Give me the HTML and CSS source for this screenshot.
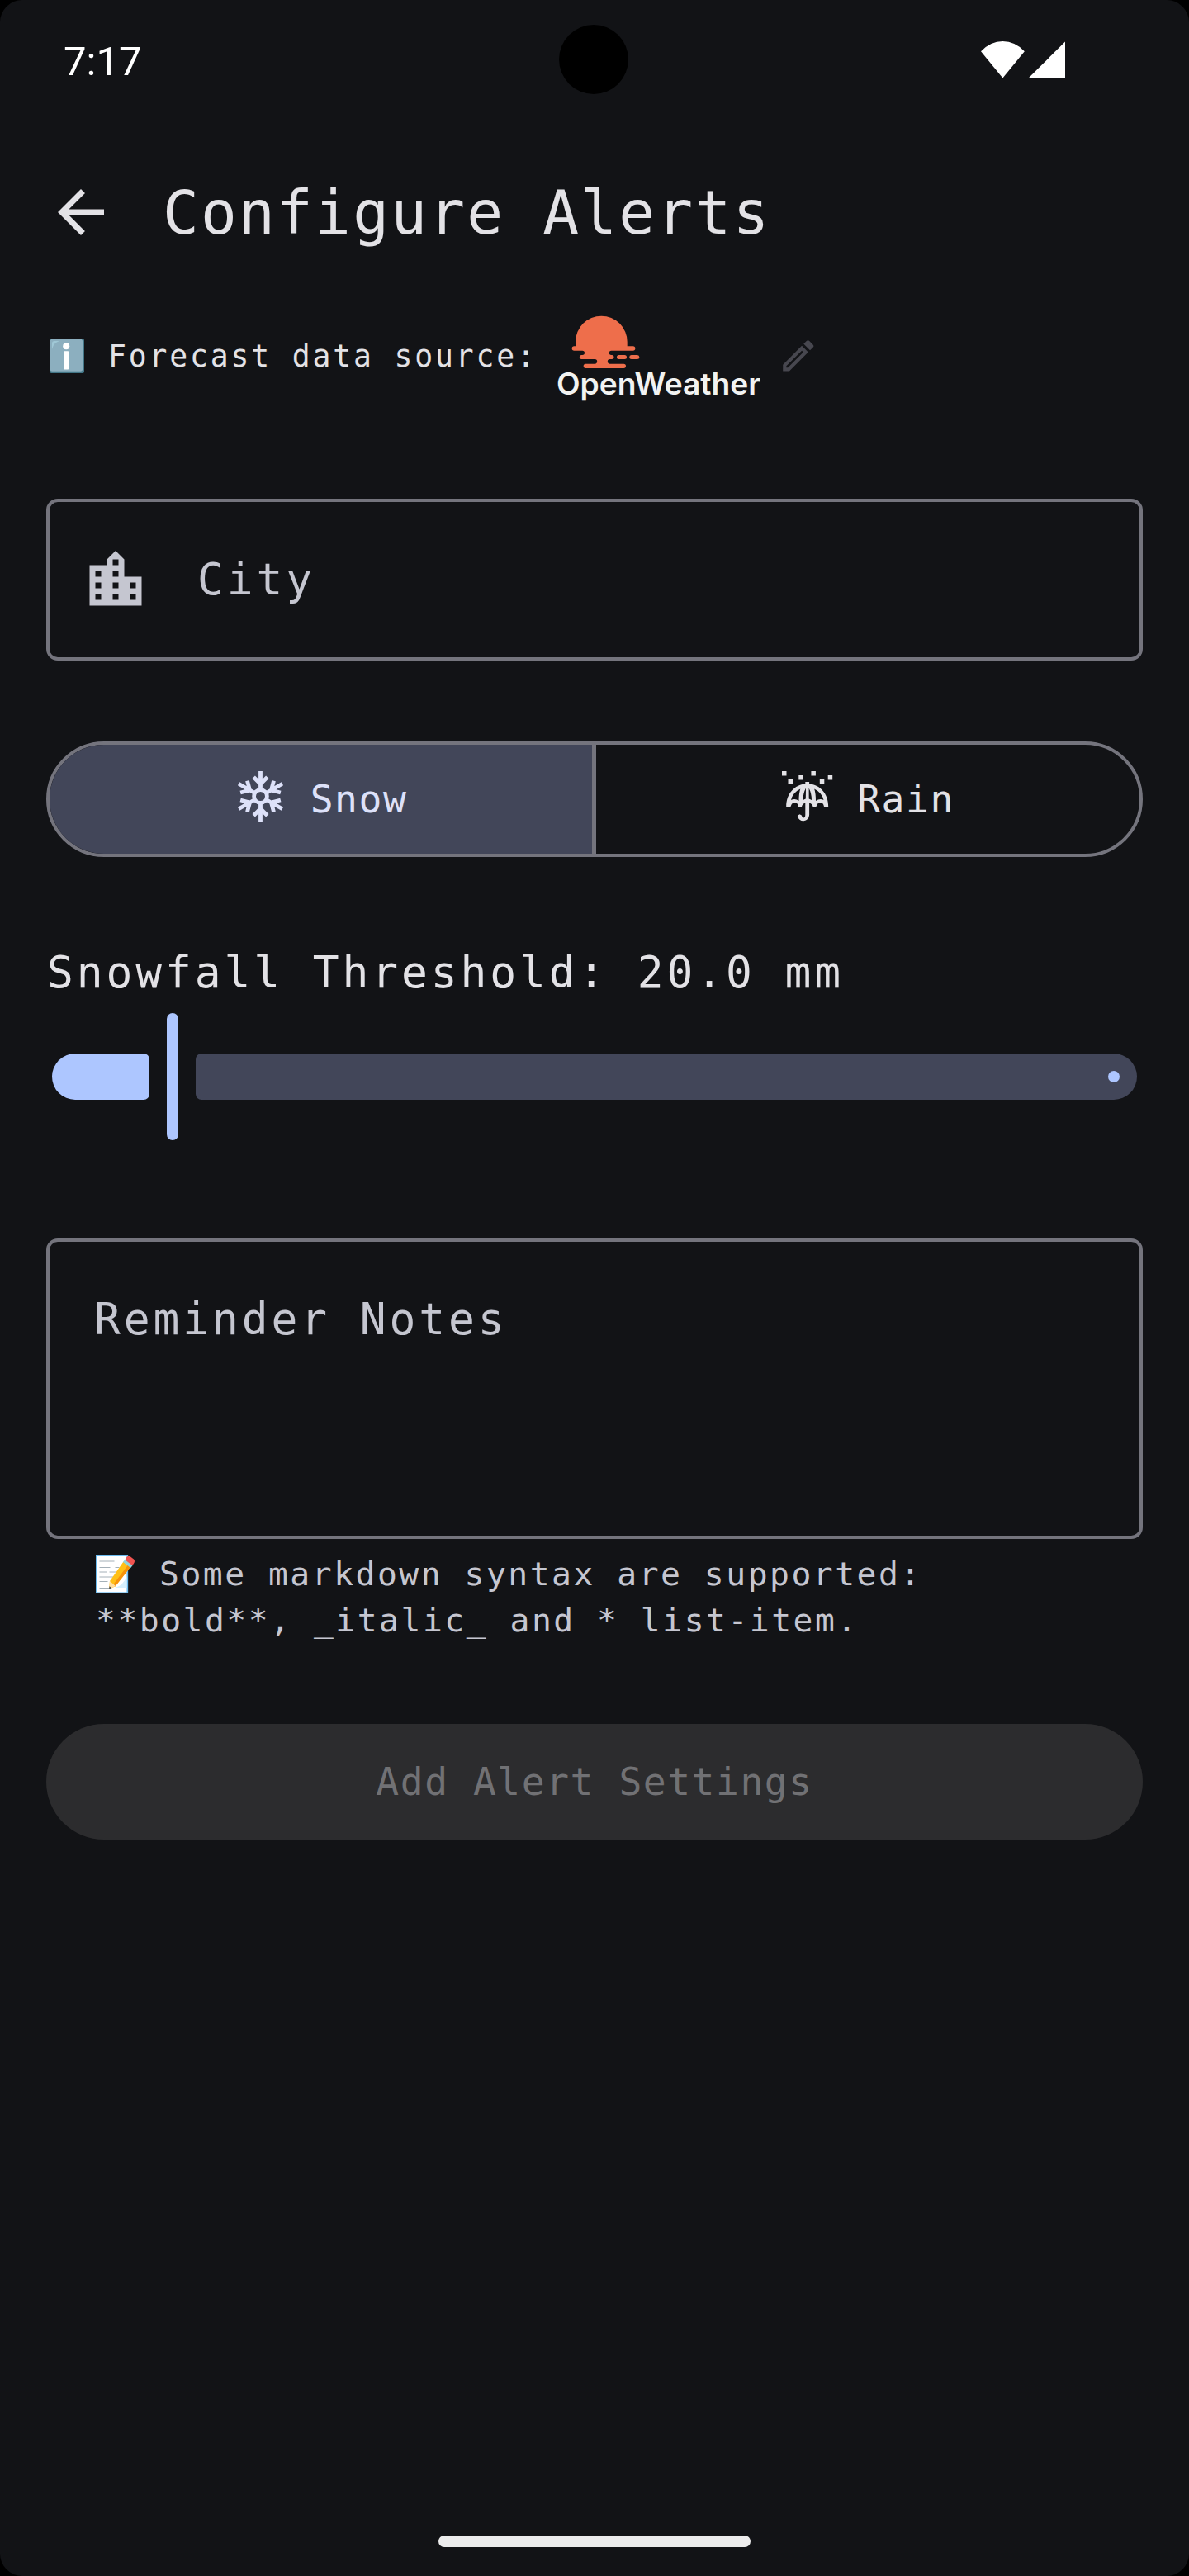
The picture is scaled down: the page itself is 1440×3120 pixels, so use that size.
FILE: index.html
```html
<!DOCTYPE html>
<html lang="en">
<head>
<meta charset="utf-8">
<title>Configure Alerts</title>
<link rel="stylesheet" href="styles.css">
</head>
<body>
<div class="screen">
  <div class="status-bar">
    <span class="clock">7:17</span>
    <span class="camera"></span>
    <svg class="signals" viewBox="0 0 102 45" aria-hidden="true">
      <path d="M0 12.2Q11.5 0 26.4 0T52.8 12.2L26.4 44.5Z"/>
      <path d="M102 .5V44.6H57.6Z"/>
    </svg>
  </div>

  <header class="app-bar">
    <svg class="back" viewBox="0 0 24 24" aria-hidden="true"><path d="M20 11H7.83l5.59-5.59L12 4l-8 8 8 8 1.41-1.41L7.83 13H20v-2z"/></svg>
    <h1 class="title">Configure Alerts</h1>
  </header>

  <main class="content">
    <div class="source">
      <svg class="info" viewBox="0 0 42 42" aria-hidden="true">
        <rect width="42" height="42" rx="2.5" fill="#427687"/>
        <rect x=".8" y=".8" width="39.2" height="39" rx="2.5" fill="#8cafbf"/>
        <path d="M3 13V6Q3 3 6 3h6Q5 5 3 13Z" fill="#b4e1ed" opacity=".5"/>
        <circle cx="20.2" cy="9.3" r="4" fill="#fff"/>
        <rect x="17.2" y="15.2" width="6" height="22.4" rx="1" fill="#fff"/>
      </svg>
      <span class="source-label">Forecast data source:</span>
      <svg class="logo" viewBox="0 0 249 110" aria-label="OpenWeather">
        <g fill="#ee6e4b" transform="translate(-35 -20) scale(.33333)">
          <path d="M168 178V162A94 94 0 0 1 356 162V178H377a8 8 0 0 1 0 16H298a8 8 0 0 0 0 16H300a7.5 7.5 0 0 1 0 15H293a8.5 8.5 0 0 0 0 17H343a8 8 0 0 1 0 16H205a8 8 0 0 1 0-16H238a8.5 8.5 0 0 0 0-17H190a7.5 7.5 0 0 1 0-15H193a8 8 0 0 0 0-16H163a8 8 0 0 1 0-16Z"/>
          <rect x="318" y="210" width="36" height="15" rx="7.5"/>
          <rect x="364" y="210" width="36" height="15" rx="7.5"/>
        </g>
        <text class="wordmark" x="-2" y="98" textLength="247" lengthAdjust="spacingAndGlyphs">OpenWeather</text>
      </svg>
      <svg class="edit" viewBox="0 0 24 24" aria-hidden="true"><path d="M14.06 9.02l.92.92L5.92 19H5v-.92l9.06-9.06M17.66 3c-.25 0-.51.1-.7.29l-1.83 1.83 3.75 3.75 1.83-1.83c.39-.39.39-1.02 0-1.41l-2.34-2.34c-.2-.2-.45-.29-.71-.29zm-3.6 3.19L3 17.25V21h3.75L17.81 9.94l-3.75-3.75z"/></svg>
    </div>

    <div class="field city">
      <svg class="city-icon" viewBox="0 0 24 24" aria-hidden="true"><path d="M15 11V5l-3-3-3 3v2H3v14h18V11h-6zm-8 8H5v-2h2v2zm0-4H5v-2h2v2zm0-4H5V9h2v2zm6 8h-2v-2h2v2zm0-4h-2v-2h2v2zm0-4h-2V9h2v2zm0-4h-2V5h2v2zm6 12h-2v-2h2v2zm0-4h-2v-2h2v2z"/></svg>
      <span class="body-text">City</span>
    </div>

    <div class="segments">
      <div class="segment selected">
        <svg class="segment-icon" viewBox="-31.5 -31.5 63 63" aria-hidden="true">
          <defs><path id="arm" d="M0-9V-30.5M-8.3-23.3L0-15 8.3-23.3"/></defs>
          <g fill="none" stroke="currentColor" stroke-width="4.8">
            <circle r="7.9"/>
            <use href="#arm"/>
            <use href="#arm" transform="rotate(60)"/>
            <use href="#arm" transform="rotate(120)"/>
            <use href="#arm" transform="rotate(180)"/>
            <use href="#arm" transform="rotate(240)"/>
            <use href="#arm" transform="rotate(300)"/>
          </g>
        </svg>
        <span>Snow</span>
      </div>
      <div class="segment">
        <svg class="segment-icon" viewBox="-1 -1 63 63" aria-hidden="true">
          <g fill="currentColor">
            <path d="M0 0h5.5v5.5H0zM35.4 0h5.5v5.5h-5.5zM20.3 5h5.5v5.5h-5.5zM55.7 5h5.5v5.5h-5.5zM7.5 10H13v5.500H7.500zM45.800 10h5.500v5.500h-5.500z"/>
            <path fill-rule="evenodd" d="M28.300 13h4.800v2.500C46 16.500 56.200 27 56.200 43H51Q50 38 46.500 38T41.500 43H37.500Q37 39.500 33.100 38.500V53A7.200 7.500 0 0 1 18.800 54L21.500 52.200 23.800 53.500Q24.500 56.500 26 56.500 28.300 56.500 28.300 53V38.500Q24.500 39.500 24 43H20Q19 38 15.500 38T10.500 43H5.200C5.200 27 15.500 16.500 28.300 15.500ZM22.300 21.500Q13 26 11 35Q16 32.500 20.500 36Q20.500 27 22.300 21.500ZM39.200 21.500Q41 27 41 36Q46 32.500 50.500 35Q48.500 26 39.200 21.500ZM29 20.500Q25.500 27 25.500 35L28.800 33.500ZM32.600 20.500L32.700 33.500 36 35Q36 27 32.600 20.500Z"/>
          </g>
        </svg>
        <span>Rain</span>
      </div>
    </div>

    <div class="body-text threshold">Snowfall Threshold: 20.0 mm</div>
    <div class="slider">
      <span class="track active"></span>
      <span class="thumb"></span>
      <span class="track rest"><span class="stop"></span></span>
    </div>

    <div class="field notes"><span class="body-text">Reminder Notes</span></div>
    <div class="helper">
      <div class="helper-line">
        <svg class="memo" viewBox="0 0 47 47" aria-hidden="true">
          <rect x=".8" y=".8" width="37.500" height="45.400" fill="#fff" stroke="#6dbcf0" stroke-width="1.700"/>
          <path d="M4.500 8h18M4.500 15.500h13m6 0h5M4.500 21h9m3 0h8M4.500 27h18M4.500 32.500h10M4.500 40.500h13" stroke="#9aa7b0" stroke-width=".9"/>
          <path d="M23 40q10-2 14.500-14v14z" fill="#d5effd"/>
          <path d="M33.500 8.500L42 15 23.500 38.500 16 41.500 17 32Z" fill="#ffc017"/>
          <path d="M39 12.500L42 15 23.500 38.500 21 36.500Z" fill="#f7930c"/>
          <path d="M17 32L24 38 16 41.500Z" fill="#ffe0a3"/>
          <path d="M16.500 38.300L19.500 40.200 16 41.500Z" fill="#4b4b4b"/>
          <path d="M35.500 5.500L45 12.500 42.300 16 33 9Z" fill="#90d2dc"/>
          <path d="M37.500 2.800Q39.500 1 42 2.500L46 5.600Q48 8 46 10.800L44.300 13 35.600 6.500Z" fill="#ef5350"/>
        </svg>
        <span>Some markdown syntax are supported:</span>
      </div>
      <div class="helper-line">**bold**, _italic_ and * list-item.</div>
    </div>

    <div class="submit">Add Alert Settings</div>
  </main>

  <div class="home-indicator"></div>
</div>
</body>
</html>
```
FILE: styles.css
```css
* { box-sizing: border-box; }

body {
  margin: 0;
  background: #000;
}

.screen {
  display: flex;
  flex-direction: column;
  width: 1440px;
  height: 3120px;
  overflow: hidden;
  border-radius: 27px;
  background: #121316;
  color: #e3e2e6;
  font-family: "DejaVu Sans Mono", monospace;
  white-space: nowrap;
}

svg { display: block; flex: none; fill: currentColor; }

.status-bar {
  display: grid;
  grid-template-columns: 600px 84px 1fr;
  height: 144px;
  padding: 0 150px 0 77px;
  align-items: center;
  color: #fff;
}
.clock {
  font: 49px/60px Roboto, sans-serif;
  padding-top: 5px;
}
.camera {
  width: 84px;
  height: 84px;
  border-radius: 50%;
  background: #000;
}
.signals { width: 102px; height: 45px; justify-self: end; }

.app-bar {
  display: flex;
  align-items: center;
  gap: 57px;
  height: 226px;
  padding-left: 56px;
}
.back { width: 84px; height: 84px; }
.title {
  margin: 0;
  font-size: 72.8px;
  font-weight: 400;
  letter-spacing: 2.2px;
}

.content {
  display: flex;
  flex-direction: column;
  padding: 0 56px;
}

.source {
  display: flex;
  align-items: center;
  height: 122px;
  padding-left: 4px;
}
.info { width: 42px; height: 42px; }
.source-label {
  width: 547px;
  margin-left: 29px;
  font-size: 36.4px;
  letter-spacing: 2.84px;
}
.logo { width: 249px; height: 110px; margin: 7px 0 0 -2px; overflow: visible; }
.wordmark {
  font: 600 37px Inter, sans-serif;
  fill: #f2f3f2;
}
.edit { width: 49.6px; height: 49.6px; margin-left: 17px; color: #47474f; }

.field {
  display: flex;
  border: 4px solid #74747d;
  border-radius: 14px;
  color: #c5c6d0;
}
.body-text {
  font-size: 52.9px;
  line-height: 84px;
  letter-spacing: 3.9px;
}
.city {
  height: 196px;
  margin-top: 112px;
  padding-left: 38px;
  align-items: center;
  gap: 57px;
}
.city-icon { width: 84px; height: 84px; }

.segments {
  display: flex;
  height: 140px;
  margin-top: 98px;
  overflow: hidden;
  border: 4px solid #74747d;
  border-radius: 70px;
}
.segment {
  display: flex;
  flex: 1;
  align-items: center;
  justify-content: center;
  gap: 29px;
  font-size: 46.3px;
  letter-spacing: 1.53px;
}
.segment.selected {
  flex: 0 0 662px;
  border-right: 5px solid #74747d;
  background: #424659;
  color: #dde1f9;
}
.segment-icon { width: 63px; height: 63px; margin-top: -7px; }

.threshold { margin-top: 98px; padding-left: 1px; }
.slider {
  display: flex;
  align-items: center;
  gap: 21px;
  height: 154px;
  margin-top: 7px;
  padding: 0 7px;
}
.track { height: 56px; }
.active {
  width: 118px;
  border-radius: 28px 7px 7px 28px;
  background: #adc6ff;
}
.thumb {
  width: 14px;
  height: 154px;
  border-radius: 7px;
  background: #adc6ff;
}
.rest {
  display: flex;
  flex: 1;
  align-items: center;
  justify-content: flex-end;
  padding-right: 21px;
  border-radius: 7px 28px 28px 7px;
  background: #424659;
}
.stop {
  width: 14px;
  height: 14px;
  border-radius: 50%;
  background: #adc6ff;
}

.notes {
  height: 364px;
  margin-top: 119px;
  padding: 52px 54px;
}
.helper {
  margin-top: 14px;
  padding-left: 60px;
  color: #c5c6d0;
  font-size: 39.7px;
  line-height: 56px;
  letter-spacing: 2.5px;
}
.helper-line {
  display: flex;
  align-items: center;
  gap: 30px;
  height: 56px;
}
.memo { width: 47px; height: 47px; }

.submit {
  display: flex;
  align-items: center;
  justify-content: center;
  height: 140px;
  margin-top: 98px;
  border-radius: 70px;
  background: #2c2c2e;
  color: #717174;
  font-size: 46.3px;
  letter-spacing: 1.53px;
}

.home-indicator {
  width: 378px;
  height: 14px;
  margin: auto auto 35px;
  border-radius: 7px;
  background: #ececec;
}
```
